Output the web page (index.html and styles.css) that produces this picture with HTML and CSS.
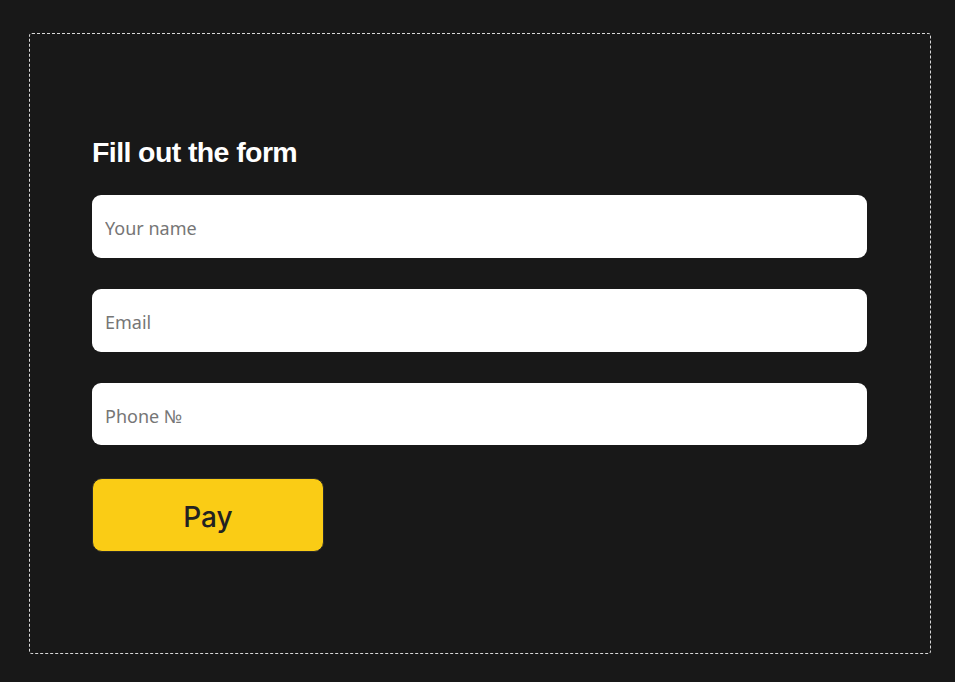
FILE: index.html
```html
<!DOCTYPE html>
<html lang="en">
<head>
<meta charset="utf-8">
<title>Form</title>
<link rel="stylesheet" href="styles.css">
</head>
<body>
<div class="frame">
  <form class="form">
    <h2 class="title">Fill out the form</h2>
    <div class="fields">
      <input class="field" type="text" placeholder="Your name">
      <input class="field" type="email" placeholder="Email">
      <input class="field" type="tel" placeholder="Phone №">
      <button class="pay" type="button">Pay</button>
    </div>
  </form>
</div>
</body>
</html>
```
FILE: styles.css
```css
html, body {
  margin: 0;
  padding: 0;
  background: #181818;
}
body {
  padding: 33px 0 0 29px;
}
.frame {
  box-sizing: border-box;
  width: 902px;
  height: 621px;
  border: 1px dashed #d8d8d8;
  border-radius: 3px;
  padding: 101px 63px 0 62px;
}
.form {
  display: flex;
  flex-direction: column;
}
.title {
  margin: 0 0 26px 0;
  font-family: "Liberation Sans", Arial, sans-serif;
  font-weight: 700;
  font-size: 28.5px;
  line-height: 34px;
  letter-spacing: -0.6px;
  color: #ffffff;
}
.fields {
  display: flex;
  flex-direction: column;
  gap: 31px;
  align-items: flex-start;
}
.field {
  box-sizing: border-box;
  width: 775px;
  height: 63px;
  border: none;
  border-radius: 9px;
  background: #ffffff;
  padding: 3px 13px 0;
  font-family: "Noto Sans", "Open Sans", sans-serif;
  font-size: 18px;
  color: #222;
  outline: none;
}
.field:nth-child(3) {
  height: 62px;
}
.field::placeholder {
  color: #767676;
}
.pay {
  box-sizing: border-box;
  width: 232px;
  height: 74px;
  margin-top: 2px;
  padding-top: 4px;
  border: 1px solid #2a2a2a;
  border-radius: 10px;
  background: #facc15;
  color: #222;
  font-family: Inter, "Liberation Sans", sans-serif;
  font-size: 28px;
  font-weight: 500;
  cursor: pointer;
}
```
